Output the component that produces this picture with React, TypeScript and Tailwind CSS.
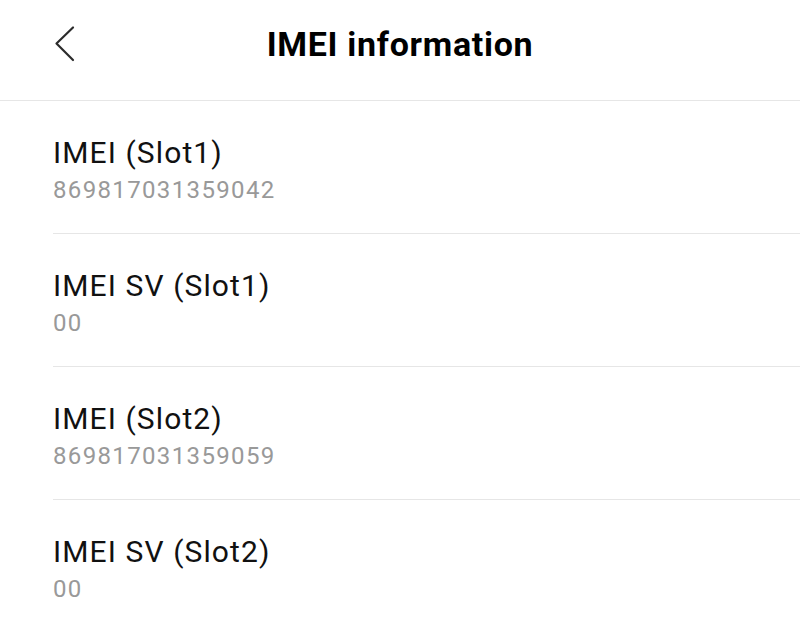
const rows = [
  { label: "IMEI (Slot1)", value: "869817031359042" },
  { label: "IMEI SV (Slot1)", value: "00" },
  { label: "IMEI (Slot2)", value: "869817031359059" },
  { label: "IMEI SV (Slot2)", value: "00" },
];

export default function App() {
  return (
    <div className="h-[631px] w-[800px] overflow-hidden bg-white font-['Roboto',sans-serif]">
      <header className="relative flex h-[101px] items-center justify-center border-b border-[#e6e6e6]">
        <button className="absolute left-[50px] top-[22px]">
          <svg width="28" height="44" viewBox="0 0 28 44" fill="none">
            <path d="M23 5.5 L6.5 21.5 L23 38" stroke="#2b2b2b" strokeWidth="2.2" strokeLinecap="round" strokeLinejoin="round" />
          </svg>
        </button>
        <h1 className="-mt-[12px] text-[34px] font-bold leading-[40px] tracking-[0.7px] text-black">IMEI information</h1>
      </header>
      <ul className="pl-[53px]">
        {rows.map((r, i) => (
          <li key={i} className="h-[133px] border-b border-[#e6e6e6] pt-[33px]">
            <div className="text-[30px] leading-[38px] tracking-[1.1px] text-[#111]">{r.label}</div>
            <div className="mt-[3px] text-[24px] leading-[30px] tracking-[1.35px] text-[#999]">{r.value}</div>
          </li>
        ))}
      </ul>
    </div>
  );
}
